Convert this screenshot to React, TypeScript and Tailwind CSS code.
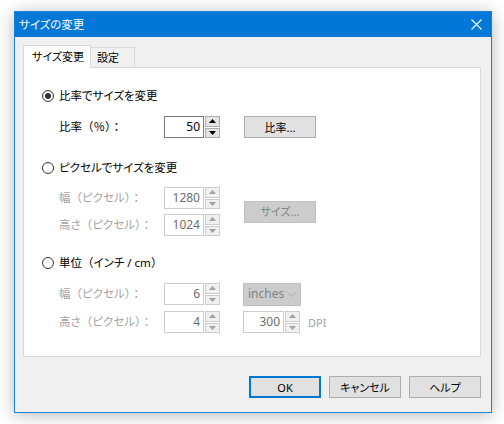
import React from "react";

// Win10 style "サイズの変更" dialog

const FONT =
  "[font-family:'Noto_Sans','Noto_Sans_CJK_JP',sans-serif] [font-feature-settings:'palt']";

// full-width brackets, percent and colon keep their full cell, kana stay proportional
function Jp({ text }: { text: string }) {
  const parts = text.split(/([（）：％])/);
  return (
    <>
      {parts.map((p, i) =>
        p && "（）：％".includes(p) ? (
          <span key={i} className="[font-feature-settings:normal]">
            {p}
          </span>
        ) : (
          p
        )
      )}
    </>
  );
}

function Radio({ checked, label }: { checked?: boolean; label: string }) {
  return (
    <div className="flex items-center h-[16px]">
      <div className="w-[12px] h-[12px] rounded-full border border-[#333333] bg-white flex items-center justify-center">
        {checked && <div className="w-[6px] h-[6px] rounded-full bg-[#333333]" />}
      </div>
      <span className="ml-[5px] text-[11.5px] leading-none text-black">
        <Jp text={label} />
      </span>
    </div>
  );
}

function Arrow({ up, disabled }: { up?: boolean; disabled?: boolean }) {
  return (
    <svg width="7" height="4" viewBox="0 0 7 4">
      <path
        d={up ? "M0 4 L3.5 0 L7 4 Z" : "M0 0 L7 0 L3.5 4 Z"}
        fill={disabled ? "#a0a0a0" : "#000000"}
      />
    </svg>
  );
}

function Spinner({ disabled }: { disabled?: boolean }) {
  const box = disabled
    ? "flex-1 border border-[#cccccc] bg-[#f0f0f0] flex items-center justify-center"
    : "flex-1 border border-[#adadad] bg-[#e5e5e5] flex items-center justify-center";
  return (
    <div className="ml-px flex flex-col gap-px w-[15px] h-[22px]">
      <div className={box}>
        <Arrow up disabled={disabled} />
      </div>
      <div className={box}>
        <Arrow disabled={disabled} />
      </div>
    </div>
  );
}

function NumberField({
  value,
  disabled,
  width = "w-[40px]",
}: {
  value: string;
  disabled?: boolean;
  width?: string;
}) {
  return (
    <div className="flex items-center">
      <div
        className={`${width} h-[22px] bg-white border flex items-center justify-end pr-[3px] text-[12px] leading-none ${
          disabled ? "border-[#cccccc] text-[#6d6d6d]" : "border-[#7a7a7a] text-black"
        }`}
      >
        {value}
      </div>
      <Spinner disabled={disabled} />
    </div>
  );
}

function Button({
  children,
  disabled,
  primary,
  className = "",
}: {
  children: React.ReactNode;
  disabled?: boolean;
  primary?: boolean;
  className?: string;
}) {
  let look = "border border-[#adadad] bg-[#e1e1e1] text-black";
  if (disabled) look = "border border-[#bfbfbf] bg-[#cccccc] text-[#838383]";
  if (primary) look = "border-2 border-[#0078d7] bg-[#e1e1e1] text-black";
  return (
    <div
      className={`w-[72px] h-[22px] flex items-center justify-center text-[11px] leading-none ${look} ${className}`}
    >
      {children}
    </div>
  );
}

function FieldRow({
  label,
  value,
  disabled,
  children,
}: {
  label: string;
  value: string;
  disabled?: boolean;
  children?: React.ReactNode;
}) {
  return (
    <div className="flex items-center h-[22px]">
      <span
        className={`w-[122px] pl-[17px] text-[11.5px] leading-none ${
          disabled ? "text-[#a3a3a3]" : "text-black"
        }`}
      >
        <Jp text={label} />
      </span>
      <NumberField value={value} disabled={disabled} />
      {children}
    </div>
  );
}

export default function App() {
  return (
    <div className={`w-[504px] h-[424px] bg-white pl-[14px] pt-[11px] ${FONT}`}>
      <div className="w-[478px] h-[402px] border border-[#1883d7] bg-[#f0f0f0] flex flex-col shadow-[0_2px_16px_rgba(0,0,0,0.28)]">
        {/* title bar */}
        <div className="h-[25px] bg-[#0078d7] flex items-center justify-between pl-[4px] pr-[9px]">
          <span className="text-[11.5px] leading-none text-white">サイズの変更</span>
          <svg width="11" height="11" viewBox="0 0 11 11">
            <path d="M0.5 0.5 L10.5 10.5 M10.5 0.5 L0.5 10.5" stroke="#ffffff" strokeWidth="1.1" />
          </svg>
        </div>

        <div className="flex-1 flex flex-col pl-[8px] pr-[10px]">
          {/* tabs */}
          <div className="mt-[8px] flex items-end">
            <div className="relative z-10 -mb-px h-[23px] w-[68px] bg-white border-l border-t border-r border-[#d9d9d9] flex items-center pl-[8px] pb-[1px] text-[11px] leading-none text-black">
              サイズ変更
            </div>
            <div className="h-[20px] w-[45px] -ml-px border-l border-t border-r border-[#d9d9d9] flex items-center pl-[6px] text-[11px] leading-none text-black">
              設定
            </div>
          </div>

          {/* panel */}
          <div className="h-[290px] border border-[#d9d9d9] bg-white pl-[18px] pt-[20px] flex flex-col">
            <Radio checked label="比率でサイズを変更" />
            <div className="mt-[12px] flex items-center">
              <FieldRow label="比率（％）：" value="50" />
              <Button className="ml-[24px]">比率...</Button>
            </div>

            <div className="mt-[22px]">
              <Radio label="ピクセルでサイズを変更" />
            </div>
            <div className="mt-[11px] flex items-center">
              <div className="flex flex-col gap-[5px]">
                <FieldRow label="幅（ピクセル）：" value="1280" disabled />
                <FieldRow label="高さ（ピクセル）：" value="1024" disabled />
              </div>
              <Button disabled className="ml-[24px]">
                サイズ...
              </Button>
            </div>

            <div className="mt-[19px]">
              <Radio label="単位（インチ / cm）" />
            </div>
            <div className="mt-[12px] flex flex-col gap-[6px]">
              <FieldRow label="幅（ピクセル）：" value="6" disabled>
                <div className="ml-[23px] w-[58px] h-[23px] border border-[#bfbfbf] bg-[#cccccc] flex items-center justify-between pl-[4px] pr-[4px] text-[12px] leading-none text-[#838383]">
                  <span>inches</span>
                  <svg width="9" height="5" viewBox="0 0 9 5">
                    <path d="M0.5 0.5 L4.5 4.5 L8.5 0.5" stroke="#a8a8a8" fill="none" />
                  </svg>
                </div>
              </FieldRow>
              <FieldRow label="高さ（ピクセル）：" value="4" disabled>
                <div className="ml-[23px]">
                  <NumberField value="300" disabled width="w-[41px]" />
                </div>
                <span className="ml-[8px] text-[11px] leading-none text-[#a3a3a3]">DPI</span>
              </FieldRow>
            </div>
          </div>

          {/* buttons */}
          <div className="mt-[19px] flex justify-end gap-[8px]">
            <Button primary>OK</Button>
            <Button>キャンセル</Button>
            <Button>ヘルプ</Button>
          </div>
        </div>
      </div>
    </div>
  );
}
